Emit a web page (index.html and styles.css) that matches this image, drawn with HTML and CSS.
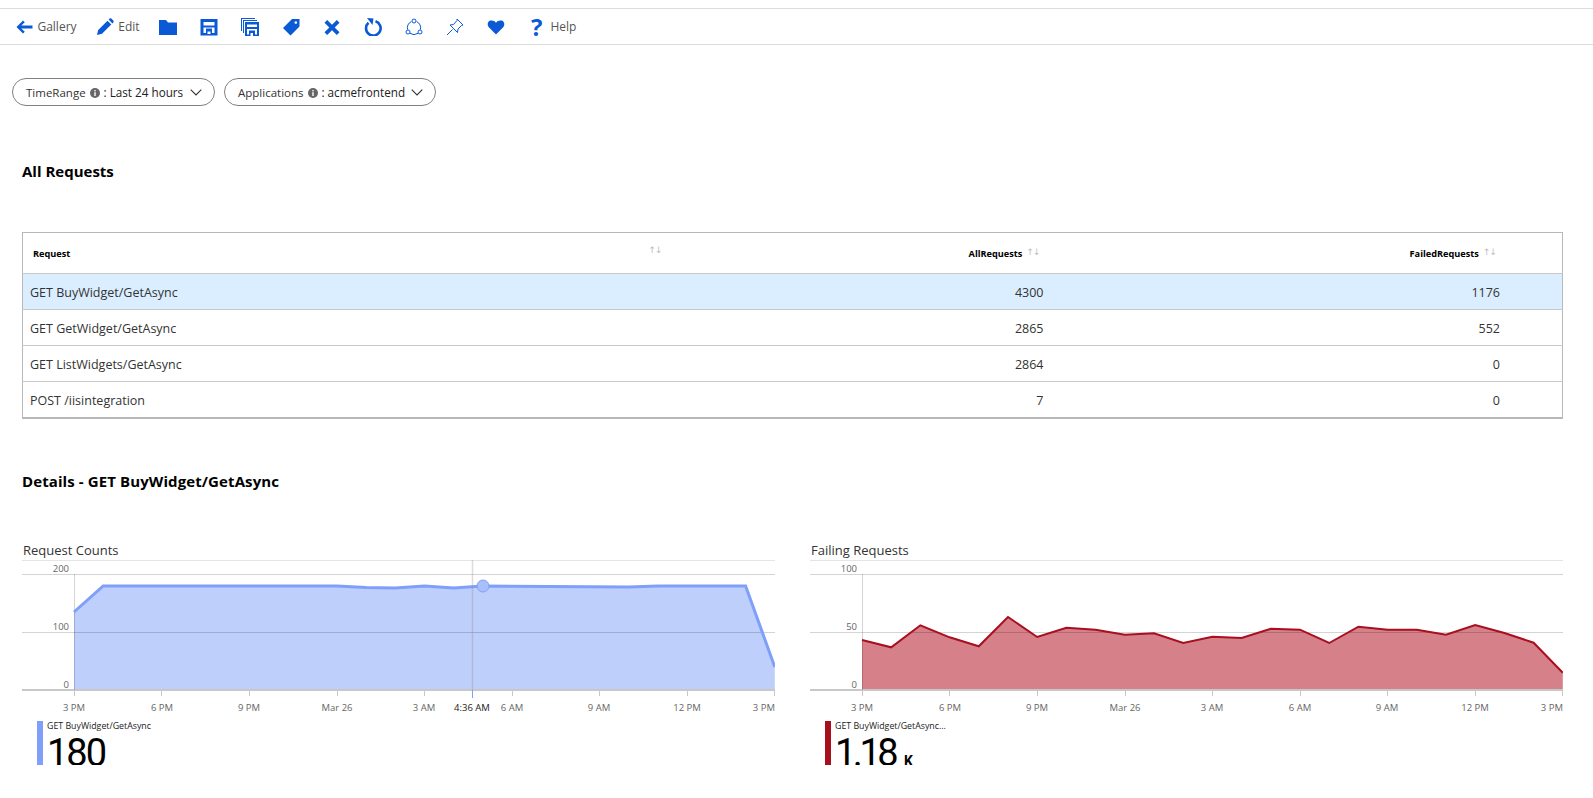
FILE: index.html
```html
<!DOCTYPE html>
<html lang="en">
<head>
    <meta charset="UTF-8">
    <title>Workbook - All Requests</title>
    <link rel="stylesheet" href="styles.css">
</head>
<body>
    <div class="toolbar">
        <span class="tool tool-gallery">
            <svg class="icon" viewBox="0 0 18 18"><path d="M8 2.500 1.500 9 8 15.500l1.800-1.800L6.300 10.400h11.200V7.600H6.300l3.500-3.300z"/></svg>
            <span>Gallery</span>
        </span>
        <span class="tool tool-edit">
            <svg class="icon" viewBox="0 0 18 18"><path d="M1 17l1.200-5L11.500 2.700l3.800 3.800L6 15.800zM12.600 1.600l.9-.9c.6-.5 1.400-.5 2 0l1.800 1.800c.5.600.5 1.400 0 2l-.9.900z"/></svg>
            <span>Edit</span>
        </span>
        <span class="tool">
            <svg class="icon" viewBox="0 0 18 18"><path d="M0 2h7l2 2.500h9V17H0z"/></svg>
        </span>
        <span class="tool">
            <svg class="icon" viewBox="0 0 18 18"><path fill-rule="evenodd" d="M.5 1h17v16.500H.5zM3.500 4v3.500h11V4zM3.500 9.500v5.500h2.500v-4.500h6v4.500h2.500V9.500zM7.500 13.500V16h3v-2.500z"/></svg>
        </span>
        <span class="tool">
            <svg class="icon" viewBox="0 0 18 18"><path fill-rule="evenodd" d="M0 0h14v1H1v12H0zM2 2h14v1H3v12H2zM4 4h14v14.500H4zM6 6.500v2.500h10V6.500zM6 11v5.500h2v-4h6v4h2V11zM9.500 15v3h2.500v-3z"/></svg>
        </span>
        <span class="tool">
            <svg class="icon" viewBox="0 0 18 18"><path fill-rule="evenodd" d="M10 1h7.500v7.500L8.500 17.500 1 10zM13.800 3.200a1.300 1.300 0 1 0 .01 0z"/></svg>
        </span>
        <span class="tool">
            <svg class="icon" viewBox="0 0 18 18"><path d="M4.200 2 9 6.800 13.800 2 16.500 4.700 11.700 9.500l4.800 4.800-2.700 2.700L9 12.200 4.200 17l-2.700-2.700 4.800-4.800L1.500 4.700z"/></svg>
        </span>
        <span class="tool">
            <svg class="icon" viewBox="0 0 18 18"><path class="stroke-bold" d="M4.500 4.800A7.300 7.300 0 1 0 11.500 3.300"/><path d="M3 0 9.500 .5 8.500 7z"/></svg>
        </span>
        <span class="tool">
            <svg class="icon" viewBox="0 0 18 18"><g class="stroke-thin"><path d="M6.300 3.600A6.800 6.800 0 0 0 2.600 11.600M11.700 3.600A6.800 6.800 0 0 1 15.400 11.600M5 15.300A7 7 0 0 0 13 15.300"/><circle cx="9" cy="3" r="2"/><circle cx="3" cy="14" r="2"/><circle cx="15" cy="14" r="2"/></g></svg>
        </span>
        <span class="tool">
            <svg class="icon" viewBox="0 0 18 18"><path class="stroke-thin" d="M11 1l6 6-1.500 .5-3.500 3.500-.5 3.500-7.500-7.500 3.500-.5L11 2.500zM6.500 11.500 1 17"/></svg>
        </span>
        <span class="tool">
            <svg class="icon" viewBox="0 0 18 18"><path d="M9 16.500 1.800 9.300C-.2 7 .6 3.400 3.300 2.600 5.400 2 7.600 2.800 9 4.800c1.400-2 3.600-2.800 5.700-2.200 2.700.8 3.500 4.400 1.500 6.700z"/></svg>
        </span>
        <span class="tool tool-help">
            <span class="help-mark">?</span>
            <span>Help</span>
        </span>
    </div>

    <div class="filters">
        <div class="pill pill-time">
            <span>TimeRange</span>
            <svg class="info" viewBox="0 0 10 10"><circle cx="5" cy="5" r="5"/><rect class="info-i" x="4.300" y="4.200" width="1.400" height="3.800"/><rect class="info-i" x="4.300" y="2" width="1.400" height="1.400"/></svg>
            <span class="pill-value">: Last 24 hours</span>
            <svg class="chevron" viewBox="0 0 12 7"><path d="M.7 .7 6 6 11.300 .7"/></svg>
        </div>
        <div class="pill pill-apps">
            <span>Applications</span>
            <svg class="info" viewBox="0 0 10 10"><circle cx="5" cy="5" r="5"/><rect class="info-i" x="4.300" y="4.200" width="1.400" height="3.800"/><rect class="info-i" x="4.300" y="2" width="1.400" height="1.400"/></svg>
            <span class="pill-value">: acmefrontend</span>
            <svg class="chevron" viewBox="0 0 12 7"><path d="M.7 .7 6 6 11.300 .7"/></svg>
        </div>
    </div>

    <h2 class="section-title title-requests">All Requests</h2>

    <table class="grid">
        <colgroup>
            <col class="col-name">
            <col class="col-all">
            <col>
        </colgroup>
        <thead>
            <tr>
                <th class="th-name">Request<span class="sort sort-name">↑↓</span></th>
                <th class="th-all">AllRequests<span class="sort">↑↓</span></th>
                <th class="th-failed">FailedRequests<span class="sort">↑↓</span></th>
            </tr>
        </thead>
        <tbody>
            <tr class="selected">
                <td>GET BuyWidget/GetAsync</td>
                <td class="num-all">4300</td>
                <td class="num-failed">1176</td>
            </tr>
            <tr>
                <td>GET GetWidget/GetAsync</td>
                <td class="num-all">2865</td>
                <td class="num-failed">552</td>
            </tr>
            <tr>
                <td>GET ListWidgets/GetAsync</td>
                <td class="num-all">2864</td>
                <td class="num-failed">0</td>
            </tr>
            <tr>
                <td>POST /iisintegration</td>
                <td class="num-all">7</td>
                <td class="num-failed">0</td>
            </tr>
        </tbody>
    </table>

    <h2 class="section-title title-details">Details - GET BuyWidget/GetAsync</h2>

    <div class="charts">
        <div class="chart">
            <div class="chart-title">Request Counts</div>
            <svg class="plot" viewBox="0 0 753 158">
                <polygon class="area-blue" points="52,52 81.200,26 314.800,26 344,27.500 373.200,28 402.400,26 431.600,28 460.800,26 606.800,27 636,26 723.600,26 752.800,107 752.800,129 52,129"/>
                <line class="grid-line light" x1="0" y1="0.500" x2="753" y2="0.500"/>
                <line class="grid-line" x1="0" y1="14.500" x2="753" y2="14.500"/>
                <line class="grid-line" x1="0" y1="72.500" x2="753" y2="72.500"/>
                <line class="grid-line base" x1="0" y1="130" x2="753" y2="130"/>
                <line class="grid-line" x1="52.500" y1="14" x2="52.500" y2="130"/>
                <polyline class="line-blue" points="52,52 81.200,26 314.800,26 344,27.500 373.200,28 402.400,26 431.600,28 460.800,26 606.800,27 636,26 723.600,26 752.800,107"/>
                <path class="tick" d="M52.500 130v6M139.500 130v6M227.500 130v6M315.500 130v6M402.500 130v6M490.500 130v6M577.500 130v6M665.500 130v6M752.500 130v6"/>
                <text class="y-label" x="47" y="12">200</text>
                <text class="y-label" x="47" y="70">100</text>
                <text class="y-label" x="47" y="128">0</text>
                <text class="x-label" x="52" y="151">3 PM</text>
                <text class="x-label" x="140" y="151">6 PM</text>
                <text class="x-label" x="227" y="151">9 PM</text>
                <text class="x-label" x="315" y="151">Mar 26</text>
                <text class="x-label" x="402" y="151">3 AM</text>
                <text class="x-label" x="490" y="151">6 AM</text>
                <text class="x-label" x="577" y="151">9 AM</text>
                <text class="x-label" x="665" y="151">12 PM</text>
                <text class="x-label end" x="753" y="151">3 PM</text>
                <line class="cross" x1="450.500" y1="0" x2="450.500" y2="130"/>
                <line class="cross-tick" x1="450.500" y1="130" x2="450.500" y2="138"/>
                <text class="x-label cross-label" x="450" y="151">4:36 AM</text>
                <circle class="dot" cx="461" cy="26" r="6"/>
            </svg>
            <div class="legend">
                <span class="legend-bar bar-blue"></span>
                <div class="legend-body">
                    <div class="legend-name name-clipped">GET BuyWidget/GetAsync</div>
                    <div class="legend-value">180</div>
                </div>
            </div>
        </div>
        <div class="chart">
            <div class="chart-title">Failing Requests</div>
            <svg class="plot" viewBox="0 0 753 158">
                <polygon class="area-red" points="52,80 81.200,87.300 110.400,65.300 139.600,77.300 168.800,86.300 198,57 227.200,77 256.400,67.700 285.600,69.700 314.800,74.700 344,73.300 373.200,83 402.400,76.700 431.600,78 460.800,68.700 490,69.700 519.200,83 548.400,66.700 577.600,69.700 606.800,69.700 636,74.700 665.200,65 694.400,73 723.600,82.700 752.800,112.700 752.800,129 52,129"/>
                <line class="grid-line light" x1="0" y1="0.500" x2="753" y2="0.500"/>
                <line class="grid-line" x1="0" y1="14.500" x2="753" y2="14.500"/>
                <line class="grid-line" x1="0" y1="72.500" x2="753" y2="72.500"/>
                <line class="grid-line base" x1="0" y1="130" x2="753" y2="130"/>
                <line class="grid-line" x1="52.500" y1="14" x2="52.500" y2="130"/>
                <polyline class="line-red" points="52,80 81.200,87.300 110.400,65.300 139.600,77.300 168.800,86.300 198,57 227.200,77 256.400,67.700 285.600,69.700 314.800,74.700 344,73.300 373.200,83 402.400,76.700 431.600,78 460.800,68.700 490,69.700 519.200,83 548.400,66.700 577.600,69.700 606.800,69.700 636,74.700 665.200,65 694.400,73 723.600,82.700 752.800,112.700"/>
                <path class="tick" d="M52.500 130v6M139.500 130v6M227.500 130v6M315.500 130v6M402.500 130v6M490.500 130v6M577.500 130v6M665.500 130v6M752.500 130v6"/>
                <text class="y-label" x="47" y="12">100</text>
                <text class="y-label" x="47" y="70">50</text>
                <text class="y-label" x="47" y="128">0</text>
                <text class="x-label" x="52" y="151">3 PM</text>
                <text class="x-label" x="140" y="151">6 PM</text>
                <text class="x-label" x="227" y="151">9 PM</text>
                <text class="x-label" x="315" y="151">Mar 26</text>
                <text class="x-label" x="402" y="151">3 AM</text>
                <text class="x-label" x="490" y="151">6 AM</text>
                <text class="x-label" x="577" y="151">9 AM</text>
                <text class="x-label" x="665" y="151">12 PM</text>
                <text class="x-label end" x="753" y="151">3 PM</text>
            </svg>
            <div class="legend">
                <span class="legend-bar bar-red"></span>
                <div class="legend-body">
                    <div class="legend-name">GET BuyWidget/GetAsync...</div>
                    <div class="legend-value value-tight">1.18<span class="legend-unit">K</span></div>
                </div>
            </div>
        </div>
    </div>
</body>
</html>
```

FILE: styles.css
```css
body {
    margin: 0;
    background-color: #ffffff;
    color: #333;
    font-family: "Open Sans", "Noto Sans", sans-serif;
    font-size: 12px;
}

/* barra degli strumenti */
.toolbar {
    display: flex;
    align-items: center;
    height: 35px;
    margin-top: 8px;
    padding-left: 6px;
    border-top: 1px solid #dcdcdc;
    border-bottom: 1px solid #dcdcdc;
    color: #555;
}
.tool {
    display: flex;
    align-items: center;
    justify-content: center;
    width: 41px;
    gap: 4px;
}
.tool-gallery {
    width: 80px;
    margin-right: 1px;
}
.tool-edit {
    width: 62px;
    margin-right: -2px;
}
.tool-help {
    justify-content: flex-start;
    width: 70px;
    padding-left: 15px;
    gap: 8px;
}
.icon {
    width: 18px;
    height: 18px;
    fill: #0a5ad6;
    flex: none;
}
.stroke-bold {
    fill: none;
    stroke: #0a5ad6;
    stroke-width: 2.6;
}
.stroke-thin {
    fill: none;
    stroke: #0a5ad6;
    stroke-width: 1;
}
.help-mark {
    color: #0a5ad6;
    font-size: 24px;
    font-weight: 700;
    line-height: 20px;
}

/* filtri */
.filters {
    display: flex;
    gap: 9px;
    margin: 33px 0 0 12px;
}
.pill {
    display: flex;
    align-items: center;
    height: 26px;
    padding: 0 12px 0 13px;
    border: 1px solid #808080;
    border-radius: 14px;
    font-size: 11.5px;
}
.pill-time {
    width: 176px;
}
.pill-apps {
    width: 185px;
}
.info {
    width: 10px;
    height: 10px;
    margin: 1px 4px 0 4px;
    fill: #666;
    flex: none;
}
.info-i {
    fill: #fff;
}
.pill-value {
    color: #222;
    font-size: 11.7px;
    white-space: nowrap;
}
.chevron {
    width: 12px;
    height: 7px;
    margin-left: auto;
    fill: none;
    stroke: #333;
    stroke-width: 1.1;
    flex: none;
}

.section-title {
    margin: 0 0 0 22px;
    color: #000;
    font-size: 15px;
    font-weight: 700;
    line-height: 20px;
}
.title-requests {
    margin-top: 55px;
}
.title-details {
    margin-top: 52px;
    letter-spacing: 0.1px;
}

/* tabella */
.grid {
    width: 1541px;
    margin: 51px 0 0 22px;
    border: 1px solid #b8b8b8;
    border-bottom-width: 2px;
    border-collapse: collapse;
    table-layout: fixed;
    box-sizing: border-box;
}
.col-name {
    width: 642px;
}
.col-all {
    width: 386px;
}
.grid th {
    height: 40px;
    padding: 0;
    border-bottom: 1px solid #c8c8c8;
    color: #000;
    font-size: 9.2px;
    font-weight: 700;
}
.th-name {
    padding-left: 10px !important;
    text-align: left;
}
.th-all {
    padding-right: 11px !important;
    text-align: right;
}
.th-failed {
    padding-right: 66px !important;
    text-align: right;
}
.sort {
    margin-left: 4px;
    color: #bdbdbd;
    font-family: "DejaVu Sans", sans-serif;
    font-size: 9px;
    font-weight: 400;
    letter-spacing: -1px;
    vertical-align: 2px;
}
.sort-name {
    float: right;
    margin-top: -2px;
    margin-right: 3px;
}
.grid td {
    height: 36px;
    padding: 2px 0 0 7px;
    border-bottom: 1px solid #c8c8c8;
    box-sizing: border-box;
    font-size: 12.5px;
}
.grid .num-all {
    padding-right: 7px;
    text-align: right;
}
.grid .num-failed {
    padding-right: 62px;
    text-align: right;
}
.selected {
    background-color: #dbeeff;
}

/* grafici */
.charts {
    display: flex;
    gap: 35px;
    margin: 50px 0 0 22px;
}
.chart {
    width: 753px;
}
.chart-title {
    height: 19px;
    padding-left: 1px;
    font-size: 13px;
    line-height: 18px;
}
.plot {
    display: block;
    width: 753px;
    height: 158px;
    font-family: "Open Sans", "Noto Sans", sans-serif;
}
.area-blue {
    fill: #bfcffb;
}
.area-red {
    fill: #d6808a;
}
.line-blue {
    fill: none;
    stroke: #7f9ffa;
    stroke-width: 3;
}
.line-red {
    fill: none;
    stroke: #a80f1f;
    stroke-width: 2;
}
.grid-line {
    stroke: #000;
    stroke-opacity: 0.17;
    stroke-width: 1;
}
.light {
    stroke-opacity: 0.1;
}
.base {
    stroke: #c8c8c8;
    stroke-opacity: 1;
    stroke-width: 2;
}
.tick {
    fill: none;
    stroke: #c8c8c8;
}
.y-label {
    fill: #666;
    font-size: 9.5px;
    text-anchor: end;
}
.x-label {
    fill: #666;
    font-size: 9.5px;
    text-anchor: middle;
}
.x-label.end {
    text-anchor: end;
}
.cross {
    stroke: #8c8c8c;
    stroke-opacity: 0.3;
    stroke-width: 1.5;
}
.cross-tick {
    stroke: #7f9ffa;
}
.cross-label {
    fill: #222;
}
.dot {
    fill: #a9bff9;
    stroke: #7f9ffa;
    stroke-width: 1;
}

/* legenda */
.legend {
    display: flex;
    gap: 4px;
    height: 44px;
    margin: 3px 0 0 15px;
}
.legend-bar {
    width: 6px;
    height: 44px;
    flex: none;
}
.bar-blue {
    background-color: #7f9ffa;
}
.bar-red {
    background-color: #a80f1c;
}
.legend-body {
    min-width: 0;
}
.legend-name {
    color: #222;
    font-size: 8.8px;
    line-height: 11px;
    white-space: nowrap;
}
.name-clipped {
    width: 106px;
    overflow: hidden;
}
.legend-value {
    margin-top: 5px;
    color: #000;
    font-family: Roboto, "Open Sans", sans-serif;
    font-size: 38px;
    letter-spacing: -2px;
    line-height: 33px;
}
.value-tight {
    letter-spacing: -3.5px;
}
.legend-unit {
    margin-left: 9px;
    font-size: 14px;
    font-weight: 700;
    letter-spacing: 0;
}
```
